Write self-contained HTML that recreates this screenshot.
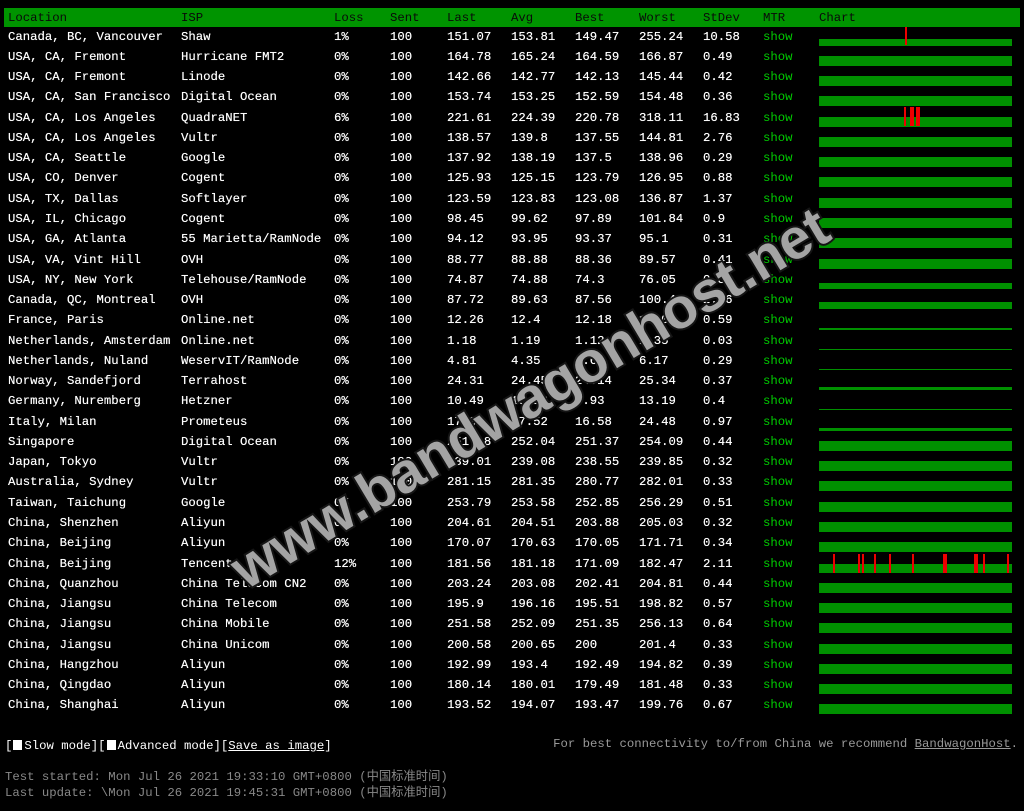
<!DOCTYPE html>
<html><head><meta charset="utf-8">
<style>
html,body{margin:0;padding:0;background:#000;}
body{width:1024px;height:811px;position:relative;overflow:hidden;font-family:"Liberation Mono","Noto Sans CJK SC",monospace;font-size:12.3px;color:#fff;}
.hd{position:absolute;left:4px;top:8px;width:1016px;height:19px;background:#009400;color:#0a0a0a;}
.r{position:absolute;left:0;width:1024px;height:16px;line-height:16px;text-shadow:0 0 0.4px #fff;}
.r span,.hd span{position:absolute;white-space:pre;}
.hd span{top:1px;line-height:18px;}
.c1{left:8px}.c2{left:181px}.c3{left:334px}.c4{left:390px}.c5{left:447px}.c6{left:511px}.c7{left:575px}.c8{left:639px}.c9{left:703px}.c10{left:763px;color:#0c0;text-shadow:none}.c11{left:819px}
.hd .c1{left:4px}.hd .c2{left:177px}.hd .c3{left:330px}.hd .c4{left:386px}.hd .c5{left:443px}.hd .c6{left:507px}.hd .c7{left:571px}.hd .c8{left:635px}.hd .c9{left:699px}.hd .c10{left:759px;color:#0a0a0a}.hd .c11{left:815px}
.b{position:absolute;left:819px;width:193px;background:#009000;}
.sp{position:absolute;width:2px;background:#e00;}
.wm{position:absolute;left:530px;top:398px;transform:translate(-50%,-50%) rotate(-30.9deg);font-family:"Liberation Sans",sans-serif;font-weight:bold;font-size:57px;color:#a4a4a4;-webkit-text-stroke:4px #151515;paint-order:stroke fill;white-space:nowrap;}
.ft{position:absolute;white-space:pre;line-height:16px;}
.cb{display:inline-block;width:9px;height:10px;background:#fff;margin:0 2px 0 1px;vertical-align:-1px;}
u{text-decoration:underline;}
</style></head><body>
<div class="hd"><span class="c1">Location</span><span class="c2">ISP</span><span class="c3">Loss</span><span class="c4">Sent</span><span class="c5">Last</span><span class="c6">Avg</span><span class="c7">Best</span><span class="c8">Worst</span><span class="c9">StDev</span><span class="c10">MTR</span><span class="c11">Chart</span></div>

<div class="r" style="top:28.5px"><span class="c1">Canada, BC, Vancouver</span><span class="c2">Shaw</span><span class="c3">1%</span><span class="c4">100</span><span class="c5">151.07</span><span class="c6">153.81</span><span class="c7">149.47</span><span class="c8">255.24</span><span class="c9">10.58</span><span class="c10">show</span></div>
<div class="r" style="top:48.8px"><span class="c1">USA, CA, Fremont</span><span class="c2">Hurricane FMT2</span><span class="c3">0%</span><span class="c4">100</span><span class="c5">164.78</span><span class="c6">165.24</span><span class="c7">164.59</span><span class="c8">166.87</span><span class="c9">0.49</span><span class="c10">show</span></div>
<div class="r" style="top:69.0px"><span class="c1">USA, CA, Fremont</span><span class="c2">Linode</span><span class="c3">0%</span><span class="c4">100</span><span class="c5">142.66</span><span class="c6">142.77</span><span class="c7">142.13</span><span class="c8">145.44</span><span class="c9">0.42</span><span class="c10">show</span></div>
<div class="r" style="top:89.3px"><span class="c1">USA, CA, San Francisco</span><span class="c2">Digital Ocean</span><span class="c3">0%</span><span class="c4">100</span><span class="c5">153.74</span><span class="c6">153.25</span><span class="c7">152.59</span><span class="c8">154.48</span><span class="c9">0.36</span><span class="c10">show</span></div>
<div class="r" style="top:109.6px"><span class="c1">USA, CA, Los Angeles</span><span class="c2">QuadraNET</span><span class="c3">6%</span><span class="c4">100</span><span class="c5">221.61</span><span class="c6">224.39</span><span class="c7">220.78</span><span class="c8">318.11</span><span class="c9">16.83</span><span class="c10">show</span></div>
<div class="r" style="top:129.9px"><span class="c1">USA, CA, Los Angeles</span><span class="c2">Vultr</span><span class="c3">0%</span><span class="c4">100</span><span class="c5">138.57</span><span class="c6">139.8</span><span class="c7">137.55</span><span class="c8">144.81</span><span class="c9">2.76</span><span class="c10">show</span></div>
<div class="r" style="top:150.1px"><span class="c1">USA, CA, Seattle</span><span class="c2">Google</span><span class="c3">0%</span><span class="c4">100</span><span class="c5">137.92</span><span class="c6">138.19</span><span class="c7">137.5</span><span class="c8">138.96</span><span class="c9">0.29</span><span class="c10">show</span></div>
<div class="r" style="top:170.4px"><span class="c1">USA, CO, Denver</span><span class="c2">Cogent</span><span class="c3">0%</span><span class="c4">100</span><span class="c5">125.93</span><span class="c6">125.15</span><span class="c7">123.79</span><span class="c8">126.95</span><span class="c9">0.88</span><span class="c10">show</span></div>
<div class="r" style="top:190.7px"><span class="c1">USA, TX, Dallas</span><span class="c2">Softlayer</span><span class="c3">0%</span><span class="c4">100</span><span class="c5">123.59</span><span class="c6">123.83</span><span class="c7">123.08</span><span class="c8">136.87</span><span class="c9">1.37</span><span class="c10">show</span></div>
<div class="r" style="top:210.9px"><span class="c1">USA, IL, Chicago</span><span class="c2">Cogent</span><span class="c3">0%</span><span class="c4">100</span><span class="c5">98.45</span><span class="c6">99.62</span><span class="c7">97.89</span><span class="c8">101.84</span><span class="c9">0.9</span><span class="c10">show</span></div>
<div class="r" style="top:231.2px"><span class="c1">USA, GA, Atlanta</span><span class="c2">55 Marietta/RamNode</span><span class="c3">0%</span><span class="c4">100</span><span class="c5">94.12</span><span class="c6">93.95</span><span class="c7">93.37</span><span class="c8">95.1</span><span class="c9">0.31</span><span class="c10">show</span></div>
<div class="r" style="top:251.5px"><span class="c1">USA, VA, Vint Hill</span><span class="c2">OVH</span><span class="c3">0%</span><span class="c4">100</span><span class="c5">88.77</span><span class="c6">88.88</span><span class="c7">88.36</span><span class="c8">89.57</span><span class="c9">0.41</span><span class="c10">show</span></div>
<div class="r" style="top:271.7px"><span class="c1">USA, NY, New York</span><span class="c2">Telehouse/RamNode</span><span class="c3">0%</span><span class="c4">100</span><span class="c5">74.87</span><span class="c6">74.88</span><span class="c7">74.3</span><span class="c8">76.05</span><span class="c9">0.3</span><span class="c10">show</span></div>
<div class="r" style="top:292.0px"><span class="c1">Canada, QC, Montreal</span><span class="c2">OVH</span><span class="c3">0%</span><span class="c4">100</span><span class="c5">87.72</span><span class="c6">89.63</span><span class="c7">87.56</span><span class="c8">100.4</span><span class="c9">2.76</span><span class="c10">show</span></div>
<div class="r" style="top:312.3px"><span class="c1">France, Paris</span><span class="c2">Online.net</span><span class="c3">0%</span><span class="c4">100</span><span class="c5">12.26</span><span class="c6">12.4</span><span class="c7">12.18</span><span class="c8">13.05</span><span class="c9">0.59</span><span class="c10">show</span></div>
<div class="r" style="top:332.5px"><span class="c1">Netherlands, Amsterdam</span><span class="c2">Online.net</span><span class="c3">0%</span><span class="c4">100</span><span class="c5">1.18</span><span class="c6">1.19</span><span class="c7">1.12</span><span class="c8">1.35</span><span class="c9">0.03</span><span class="c10">show</span></div>
<div class="r" style="top:352.8px"><span class="c1">Netherlands, Nuland</span><span class="c2">WeservIT/RamNode</span><span class="c3">0%</span><span class="c4">100</span><span class="c5">4.81</span><span class="c6">4.35</span><span class="c7">4.6</span><span class="c8">6.17</span><span class="c9">0.29</span><span class="c10">show</span></div>
<div class="r" style="top:373.1px"><span class="c1">Norway, Sandefjord</span><span class="c2">Terrahost</span><span class="c3">0%</span><span class="c4">100</span><span class="c5">24.31</span><span class="c6">24.45</span><span class="c7">24.14</span><span class="c8">25.34</span><span class="c9">0.37</span><span class="c10">show</span></div>
<div class="r" style="top:393.4px"><span class="c1">Germany, Nuremberg</span><span class="c2">Hetzner</span><span class="c3">0%</span><span class="c4">100</span><span class="c5">10.49</span><span class="c6">10.18</span><span class="c7">9.93</span><span class="c8">13.19</span><span class="c9">0.4</span><span class="c10">show</span></div>
<div class="r" style="top:413.6px"><span class="c1">Italy, Milan</span><span class="c2">Prometeus</span><span class="c3">0%</span><span class="c4">100</span><span class="c5">17.04</span><span class="c6">17.52</span><span class="c7">16.58</span><span class="c8">24.48</span><span class="c9">0.97</span><span class="c10">show</span></div>
<div class="r" style="top:433.9px"><span class="c1">Singapore</span><span class="c2">Digital Ocean</span><span class="c3">0%</span><span class="c4">100</span><span class="c5">251.18</span><span class="c6">252.04</span><span class="c7">251.37</span><span class="c8">254.09</span><span class="c9">0.44</span><span class="c10">show</span></div>
<div class="r" style="top:454.2px"><span class="c1">Japan, Tokyo</span><span class="c2">Vultr</span><span class="c3">0%</span><span class="c4">100</span><span class="c5">239.01</span><span class="c6">239.08</span><span class="c7">238.55</span><span class="c8">239.85</span><span class="c9">0.32</span><span class="c10">show</span></div>
<div class="r" style="top:474.4px"><span class="c1">Australia, Sydney</span><span class="c2">Vultr</span><span class="c3">0%</span><span class="c4">100</span><span class="c5">281.15</span><span class="c6">281.35</span><span class="c7">280.77</span><span class="c8">282.01</span><span class="c9">0.33</span><span class="c10">show</span></div>
<div class="r" style="top:494.7px"><span class="c1">Taiwan, Taichung</span><span class="c2">Google</span><span class="c3">0%</span><span class="c4">100</span><span class="c5">253.79</span><span class="c6">253.58</span><span class="c7">252.85</span><span class="c8">256.29</span><span class="c9">0.51</span><span class="c10">show</span></div>
<div class="r" style="top:515.0px"><span class="c1">China, Shenzhen</span><span class="c2">Aliyun</span><span class="c3">0%</span><span class="c4">100</span><span class="c5">204.61</span><span class="c6">204.51</span><span class="c7">203.88</span><span class="c8">205.03</span><span class="c9">0.32</span><span class="c10">show</span></div>
<div class="r" style="top:535.2px"><span class="c1">China, Beijing</span><span class="c2">Aliyun</span><span class="c3">0%</span><span class="c4">100</span><span class="c5">170.07</span><span class="c6">170.63</span><span class="c7">170.05</span><span class="c8">171.71</span><span class="c9">0.34</span><span class="c10">show</span></div>
<div class="r" style="top:555.5px"><span class="c1">China, Beijing</span><span class="c2">Tencent</span><span class="c3">12%</span><span class="c4">100</span><span class="c5">181.56</span><span class="c6">181.18</span><span class="c7">171.09</span><span class="c8">182.47</span><span class="c9">2.11</span><span class="c10">show</span></div>
<div class="r" style="top:575.8px"><span class="c1">China, Quanzhou</span><span class="c2">China Telecom CN2</span><span class="c3">0%</span><span class="c4">100</span><span class="c5">203.24</span><span class="c6">203.08</span><span class="c7">202.41</span><span class="c8">204.81</span><span class="c9">0.44</span><span class="c10">show</span></div>
<div class="r" style="top:596.0px"><span class="c1">China, Jiangsu</span><span class="c2">China Telecom</span><span class="c3">0%</span><span class="c4">100</span><span class="c5">195.9</span><span class="c6">196.16</span><span class="c7">195.51</span><span class="c8">198.82</span><span class="c9">0.57</span><span class="c10">show</span></div>
<div class="r" style="top:616.3px"><span class="c1">China, Jiangsu</span><span class="c2">China Mobile</span><span class="c3">0%</span><span class="c4">100</span><span class="c5">251.58</span><span class="c6">252.09</span><span class="c7">251.35</span><span class="c8">256.13</span><span class="c9">0.64</span><span class="c10">show</span></div>
<div class="r" style="top:636.6px"><span class="c1">China, Jiangsu</span><span class="c2">China Unicom</span><span class="c3">0%</span><span class="c4">100</span><span class="c5">200.58</span><span class="c6">200.65</span><span class="c7">200</span><span class="c8">201.4</span><span class="c9">0.33</span><span class="c10">show</span></div>
<div class="r" style="top:656.9px"><span class="c1">China, Hangzhou</span><span class="c2">Aliyun</span><span class="c3">0%</span><span class="c4">100</span><span class="c5">192.99</span><span class="c6">193.4</span><span class="c7">192.49</span><span class="c8">194.82</span><span class="c9">0.39</span><span class="c10">show</span></div>
<div class="r" style="top:677.1px"><span class="c1">China, Qingdao</span><span class="c2">Aliyun</span><span class="c3">0%</span><span class="c4">100</span><span class="c5">180.14</span><span class="c6">180.01</span><span class="c7">179.49</span><span class="c8">181.48</span><span class="c9">0.33</span><span class="c10">show</span></div>
<div class="r" style="top:697.4px"><span class="c1">China, Shanghai</span><span class="c2">Aliyun</span><span class="c3">0%</span><span class="c4">100</span><span class="c5">193.52</span><span class="c6">194.07</span><span class="c7">193.47</span><span class="c8">199.76</span><span class="c9">0.67</span><span class="c10">show</span></div>

<div class="b" style="top:38.5px;height:7px"></div>
<div class="sp" style="left:905px;top:27px;height:18px"></div>
<div class="b" style="top:55.8px;height:10px"></div>
<div class="b" style="top:76.0px;height:10px"></div>
<div class="b" style="top:96.3px;height:10px"></div>
<div class="b" style="top:116.6px;height:10px"></div>
<div class="sp" style="left:904px;top:107px;height:19px"></div>
<div class="sp" style="left:910px;top:107px;height:19px;width:4px"></div>
<div class="sp" style="left:916px;top:107px;height:19px;width:4px"></div>
<div class="b" style="top:136.9px;height:10px"></div>
<div class="b" style="top:157.1px;height:10px"></div>
<div class="b" style="top:177.4px;height:10px"></div>
<div class="b" style="top:197.7px;height:10px"></div>
<div class="b" style="top:217.9px;height:10px"></div>
<div class="b" style="top:238.2px;height:10px"></div>
<div class="b" style="top:258.5px;height:10px"></div>
<div class="b" style="top:283.2px;height:6px"></div>
<div class="b" style="top:302.0px;height:7px"></div>
<div class="b" style="top:327.8px;height:2px"></div>
<div class="b" style="top:348.5px;height:1px"></div>
<div class="b" style="top:368.8px;height:1px"></div>
<div class="b" style="top:387.1px;height:3px"></div>
<div class="b" style="top:409.4px;height:1px"></div>
<div class="b" style="top:427.6px;height:3px"></div>
<div class="b" style="top:440.9px;height:10px"></div>
<div class="b" style="top:461.2px;height:10px"></div>
<div class="b" style="top:481.4px;height:10px"></div>
<div class="b" style="top:501.7px;height:10px"></div>
<div class="b" style="top:522.0px;height:10px"></div>
<div class="b" style="top:542.2px;height:10px"></div>
<div class="b" style="top:563.5px;height:9px"></div>
<div class="sp" style="left:833px;top:554px;height:19px"></div>
<div class="sp" style="left:858px;top:554px;height:19px"></div>
<div class="sp" style="left:862px;top:554px;height:19px"></div>
<div class="sp" style="left:874px;top:554px;height:19px"></div>
<div class="sp" style="left:889px;top:554px;height:19px"></div>
<div class="sp" style="left:912px;top:554px;height:19px"></div>
<div class="sp" style="left:943px;top:554px;height:19px;width:4px"></div>
<div class="sp" style="left:974px;top:554px;height:19px;width:4px"></div>
<div class="sp" style="left:983px;top:554px;height:19px"></div>
<div class="sp" style="left:1007px;top:554px;height:19px"></div>
<div class="b" style="top:582.8px;height:10px"></div>
<div class="b" style="top:603.0px;height:10px"></div>
<div class="b" style="top:623.3px;height:10px"></div>
<div class="b" style="top:643.6px;height:10px"></div>
<div class="b" style="top:663.9px;height:10px"></div>
<div class="b" style="top:684.1px;height:10px"></div>
<div class="b" style="top:704.4px;height:10px"></div>

<div class="wm">www.bandwagonhost.net</div>

<div class="ft" style="left:5px;top:738px;color:#fff">[<span class="cb"></span>Slow mode][<span class="cb"></span>Advanced mode][<u>Save as image</u>]</div>
<div class="ft" style="right:6px;top:736px;color:#999">For best connectivity to/from China we recommend <u>BandwagonHost</u>.</div>
<div class="ft" style="left:5px;top:769px;color:#888">Test started: Mon Jul 26 2021 19:33:10 GMT+0800 (中国标准时间)</div>
<div class="ft" style="left:5px;top:785px;color:#888">Last update: \Mon Jul 26 2021 19:45:31 GMT+0800 (中国标准时间)</div>
</body></html>
